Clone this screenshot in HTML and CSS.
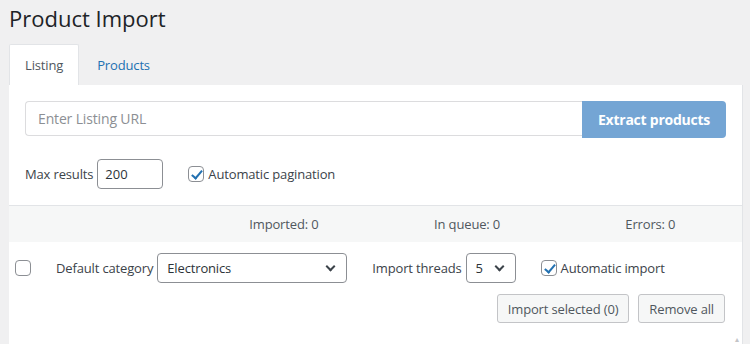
FILE: index.html
```html
<!DOCTYPE html>
<html lang="en">
<head>
    <meta charset="UTF-8">
    <title>Product Import</title>
    <link rel="stylesheet" href="styles.css">
</head>
<body>
    <h1 class="page-title">Product Import</h1>

    <!-- tabs -->
    <div class="tabs">
        <a class="tab active">Listing</a>
        <a class="tab">Products</a>
    </div>

    <div class="panel">
        <!-- listing url -->
        <div class="extract">
            <div class="url-row">
                <input class="url-input" type="text" placeholder="Enter Listing URL">
                <button class="btn-extract">Extract products</button>
            </div>
            <div class="options-row">
                <label class="field">Max results <input class="num-input" type="text" value="200"></label>
                <label class="check-label"><span class="checkbox checked"></span>Automatic pagination</label>
            </div>
        </div>

        <!-- stats -->
        <div class="stats">
            <span></span>
            <span>Imported: 0</span>
            <span>In queue: 0</span>
            <span>Errors: 0</span>
        </div>

        <!-- import controls -->
        <div class="items">
            <div class="items-row">
                <span class="checkbox"></span>
                <label class="field cat-field">Default category
                    <span class="select wide">Electronics <span class="chev"></span></span>
                </label>
                <label class="field threads-field">Import threads
                    <span class="select small">5 <span class="chev"></span></span>
                </label>
                <label class="check-label"><span class="checkbox checked"></span>Automatic import</label>
            </div>
            <div class="actions">
                <button class="btn">Import selected (0)</button>
                <button class="btn">Remove all</button>
            </div>
        </div>
        <span class="to-top">&#9652;</span>
    </div>
</body>
</html>
```

FILE: styles.css
```css
body {
    margin: 0;
    padding: 0 7px 0 9px;
    background-color: #f0f0f1;
    font-family: 'Open Sans', 'Noto Sans', sans-serif;
    font-size: 13px;
    letter-spacing: -0.15px;
    color: #3c434a;
    overflow: hidden;
}

.page-title {
    margin: 0;
    padding: 3px 0 0 0;
    font-size: 22px;
    font-weight: 400;
    line-height: 30px;
    letter-spacing: 0;
    color: #1d2327;
}

/* tabs */
.tabs {
    display: flex;
    margin-top: 11px;
    height: 41px;
}

.tab {
    display: flex;
    align-items: center;
    padding: 0 15px;
    font-size: 13px;
    color: #2271b1;
    cursor: pointer;
}

.tab.active {
    background-color: #fff;
    color: #50575e;
    border: 1px solid #e2e4e7;
    border-bottom: none;
    border-radius: 2px 2px 0 0;
    margin-right: 3px;
}

/* panel */
.panel {
    position: relative;
    background-color: #fff;
    border-right: 1px solid #e2e4e7;
    width: 733px;
    height: 259px;
}

.extract {
    padding: 16px;
}

.url-row {
    display: flex;
    align-items: flex-start;
}

.url-input {
    flex: 1;
    height: 35px;
    box-sizing: border-box;
    border: 1px solid #dcdcde;
    border-right: none;
    border-radius: 4px 0 0 4px;
    padding: 0 12px;
    font-family: inherit;
    font-size: 14px;
    letter-spacing: -0.15px;
    outline: none;
}

.url-input::placeholder {
    color: #8c8f94;
}

.btn-extract {
    width: 144px;
    height: 37px;
    border: none;
    border-radius: 0 4px 4px 0;
    background-color: #74a5d4;
    color: #fff;
    font-family: inherit;
    font-size: 14px;
    font-weight: 700;
    letter-spacing: -0.25px;
}

.options-row {
    display: flex;
    align-items: center;
    gap: 25px;
    margin-top: 21px;
}

.field {
    display: flex;
    align-items: center;
    gap: 4px;
}

.num-input {
    width: 66px;
    height: 30px;
    box-sizing: border-box;
    border: 1px solid #8c8f94;
    border-radius: 4px;
    padding: 0 7px;
    font-family: inherit;
    font-size: 13px;
    color: #2c3338;
}

.check-label {
    display: flex;
    align-items: center;
    gap: 4px;
}

.checkbox {
    display: inline-block;
    width: 16px;
    height: 16px;
    box-sizing: border-box;
    border: 1px solid #8c8f94;
    border-radius: 4px;
    position: relative;
    background: #fff;
}

.checkbox.checked::after {
    content: '';
    position: absolute;
    left: 5px;
    top: 1px;
    width: 4px;
    height: 9px;
    border-right: 2px solid #2271b1;
    border-bottom: 2px solid #2271b1;
    transform: rotate(40deg);
}

/* stats */
.stats {
    display: grid;
    grid-template-columns: repeat(4, 1fr);
    height: 36px;
    align-items: center;
    background-color: #f6f7f7;
    border-top: 1px solid #e2e4e7;
    text-align: center;
    color: #50575e;
}

/* import controls */
.items {
    padding: 11px 17px 0 6px;
}

.items-row {
    display: flex;
    align-items: center;
    height: 30px;
}

.cat-field {
    margin-left: 25px;
}

.threads-field {
    margin-left: 25px;
}

.items-row .check-label {
    margin-left: 25px;
}

.select {
    display: flex;
    align-items: center;
    justify-content: space-between;
    height: 30px;
    box-sizing: border-box;
    border: 1px solid #8c8f94;
    border-radius: 4px;
    padding: 0 8px 0 9px;
    color: #2c3338;
    font-size: 13px;
}

.select.wide {
    width: 190px;
}

.select.small {
    width: 50px;
}

.chev {
    width: 5px;
    height: 5px;
    border-right: 2px solid #3c434a;
    border-bottom: 2px solid #3c434a;
    transform: rotate(45deg);
    margin: -4px 4px 0 0;
}

.actions {
    display: flex;
    justify-content: flex-end;
    gap: 9px;
    margin-top: 11px;
}

.btn {
    height: 29px;
    padding: 0 10px;
    border: 1px solid #c3c4c7;
    border-radius: 3px;
    background-color: #f6f7f7;
    color: #50575e;
    font-family: inherit;
    font-size: 13px;
    letter-spacing: -0.15px;
}

.to-top {
    position: absolute;
    right: 3px;
    bottom: 0;
    font-size: 8px;
    color: #c3c4c7;
}
```
